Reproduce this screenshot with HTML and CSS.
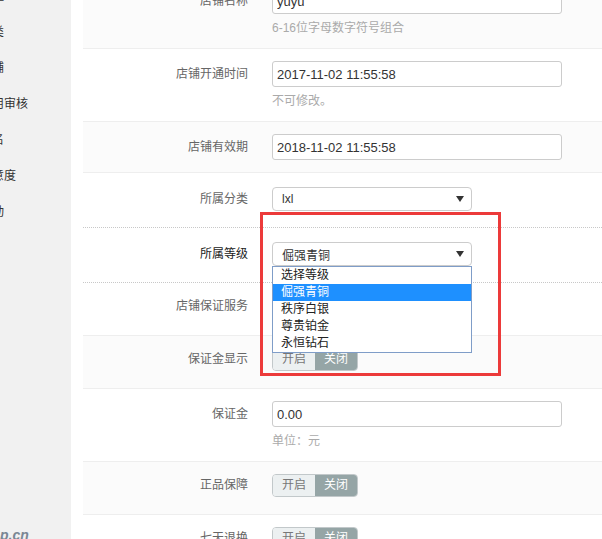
FILE: index.html
```html
<!DOCTYPE html>
<html lang="zh-CN">
<head>
  <meta charset="UTF-8" />
  <title>店铺信息</title>
  <link rel="stylesheet" href="styles.css">
</head>
<body>
  <div class="page">

    <!-- 侧边菜单 -->
    <aside class="side">
      <ul class="side-menu">
        <li>店铺管理</li>
        <li>店铺分类</li>
        <li>全部店铺</li>
        <li>店铺信用审核</li>
        <li>店铺排名</li>
        <li>店铺满意度</li>
        <li>店铺活动</li>
      </ul>
      <div class="side-logo">p.cn</div>
    </aside>

    <!-- 表单 -->
    <main class="main">
      <div class="form">
        <div class="row alt">
          <label class="row-label">店铺名称</label>
          <div class="row-ctrl">
            <input class="text" type="text" value="yuyu">
            <p class="hint">6-16位字母数字符号组合</p>
          </div>
        </div>

        <div class="row">
          <label class="row-label">店铺开通时间</label>
          <div class="row-ctrl">
            <input class="text" type="text" value="2017-11-02 11:55:58">
            <p class="hint">不可修改。</p>
          </div>
        </div>

        <div class="row alt">
          <label class="row-label">店铺有效期</label>
          <div class="row-ctrl">
            <input class="text" type="text" value="2018-11-02 11:55:58">
          </div>
        </div>

        <div class="row row-select dotted">
          <label class="row-label">所属分类</label>
          <div class="row-ctrl">
            <div class="select"><span>lxl</span><i class="caret"></i></div>
          </div>
        </div>

        <div class="row row-select dotted">
          <label class="row-label strong">所属等级</label>
          <div class="row-ctrl">
            <div class="select-wrap">
              <div class="select"><span>倔强青铜</span><i class="caret"></i></div>
              <ul class="options">
                <li>选择等级</li>
                <li class="on">倔强青铜</li>
                <li>秩序白银</li>
                <li>尊贵铂金</li>
                <li>永恒钻石</li>
              </ul>
            </div>
          </div>
        </div>

        <div class="row row-switch">
          <label class="row-label">店铺保证服务</label>
          <div class="row-ctrl">
            <div class="switch"><span>开启</span><span class="off">关闭</span></div>
          </div>
        </div>

        <div class="row row-switch alt">
          <label class="row-label">保证金显示</label>
          <div class="row-ctrl">
            <div class="switch"><span>开启</span><span class="off">关闭</span></div>
          </div>
        </div>

        <div class="row">
          <label class="row-label">保证金</label>
          <div class="row-ctrl">
            <input class="text" type="text" value="0.00">
            <p class="hint">单位：元</p>
          </div>
        </div>

        <div class="row row-switch alt">
          <label class="row-label">正品保障</label>
          <div class="row-ctrl">
            <div class="switch"><span>开启</span><span class="off">关闭</span></div>
          </div>
        </div>

        <div class="row row-switch">
          <label class="row-label">七天退换</label>
          <div class="row-ctrl">
            <div class="switch"><span>开启</span><span class="off">关闭</span></div>
          </div>
        </div>
      </div>
    </main>

    <!-- 标注框 -->
    <div class="mark"></div>
  </div>
</body>
</html>
```

FILE: styles.css
```css
* {
  margin: 0;
  padding: 0;
  box-sizing: border-box;
}
body {
  font-family: "Liberation Sans", "Noto Sans CJK SC", sans-serif;
  font-size: 12px;
  color: #333;
  background: #fff;
  overflow: hidden;
}

.page {
  position: relative;
  display: flex;
  height: 539px;
  overflow: hidden;
}

/* 侧边菜单 */
.side {
  width: 71px;
  flex: none;
  background: #f1f1f1;
  display: flex;
  flex-direction: column;
  overflow: hidden;
}
.side-menu {
  list-style: none;
  margin: -22px 0 0 -44px;
  white-space: nowrap;
}
.side-menu li {
  line-height: 36px;
  font-size: 12px;
  color: #333;
}
.side-logo {
  margin-top: auto;
  font-size: 14px;
  font-weight: bold;
  font-style: italic;
  color: #7a8794;
  line-height: 16px;
  margin-bottom: -4px;
}

/* 表单 */
.main {
  flex: 1;
  margin-left: 12px;
}
.form {
  margin-top: -24px;
}
.row {
  display: flex;
  align-items: flex-start;
  padding: 12px 0 11px;
  border-bottom: 1px solid #eee;
  background: #fff;
}
.row.alt {
  background: #fbfbfb;
}
.row.dotted {
  border-bottom: 1px dotted #c8c8c8;
}
.row-label {
  width: 165px;
  flex: none;
  text-align: right;
  line-height: 26px;
  color: #666;
}
.row-label.strong {
  color: #222;
}
.row-ctrl {
  margin-left: 24px;
}

.text {
  display: block;
  width: 290px;
  height: 26px;
  border: 1px solid #ccc;
  border-radius: 3px;
  padding: 0 4px;
  font-family: "Liberation Sans", "Noto Sans CJK SC", sans-serif;
  font-size: 13px;
  color: #333;
  background: #fff;
}
.hint {
  margin-top: 5px;
  line-height: 18px;
  color: #aaa;
}
.row:nth-child(3) {
  padding-bottom: 12px;
}

/* 下拉 */
.row-select {
  padding: 14px 0 16px;
}
.row-select .row-label {
  line-height: 24px;
}
.select-wrap {
  position: relative;
}
.select {
  width: 200px;
  height: 24px;
  border: 1px solid #ccc;
  border-radius: 4px;
  background: #fff;
  display: flex;
  align-items: center;
  justify-content: space-between;
  padding: 0 7px 0 9px;
  color: #333;
}
.caret {
  width: 0;
  height: 0;
  border-left: 4px solid transparent;
  border-right: 4px solid transparent;
  border-top: 6px solid #333;
}
.options {
  position: absolute;
  top: 100%;
  left: 0;
  width: 200px;
  list-style: none;
  background: #fff;
  border: 1px solid #7f9dc8;
  z-index: 2;
}
.options li {
  height: 17px;
  line-height: 17px;
  padding-left: 8px;
  color: #222;
}
.options li.on {
  background: #1e90ff;
  color: #fff;
}

/* 开关 */
.row-switch {
  padding: 12px 0 17px;
}
.row-switch .row-label {
  line-height: 23px;
}
.switch {
  display: flex;
  width: 86px;
  height: 23px;
  border: 1px solid #c2c8ca;
  border-radius: 4px;
  overflow: hidden;
}
.switch span {
  flex: 1;
  text-align: center;
  line-height: 21px;
  background: #ecf0f1;
  color: #777;
}
.switch span.off {
  background: #95a5a6;
  color: #fff;
}

/* 标注框 */
.mark {
  position: absolute;
  left: 260px;
  top: 212px;
  width: 241px;
  height: 164px;
  border: 3px solid #ec3a3a;
  pointer-events: none;
  z-index: 3;
}
```
